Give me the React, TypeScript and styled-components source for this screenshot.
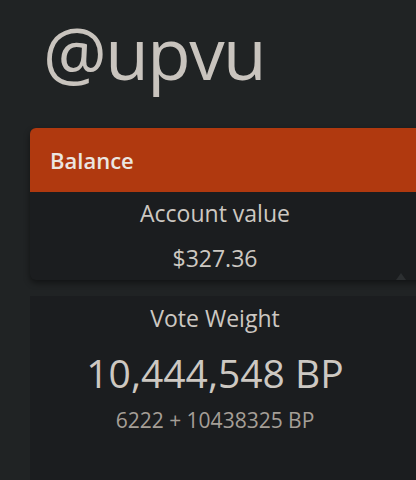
import React from 'react';
import styled, { createGlobalStyle } from 'styled-components';

const GlobalStyle = createGlobalStyle`
    html, body {
        margin: 0;
        padding: 0;
        background: #202324;
        overflow: hidden;
    }
    body {
        font-family: "Open Sans", "Noto Sans", sans-serif;
        color: #cdc8c2;
    }
`;

const Page = styled.div`
    width: 416px;
    height: 480px;
    overflow: hidden;
    padding: 0 0 0 30px;
    box-sizing: border-box;
`;

const Title = styled.h1`
    margin: 0;
    padding: 10px 0 0 13px;
    height: 128px;
    box-sizing: border-box;
    font-size: 71px;
    font-weight: 400;
    line-height: 86px;
    letter-spacing: -1.5px;
    color: #c9c4be;
`;

const Card = styled.section<{ $rounded?: boolean }>`
    width: 400px;
    background: #1b1d1f;
    border-radius: ${(p) => (p.$rounded ? '6px' : '0')};
    box-shadow: ${(p) => (p.$rounded ? '0 3px 6px rgba(0, 0, 0, 0.45)' : 'none')};
    overflow: hidden;
    position: relative;
`;

const CardHeader = styled.div`
    height: 64px;
    background: #b0390f;
    display: flex;
    align-items: center;
    padding-left: 20px;
    font-size: 22px;
    font-weight: 600;
    color: #ebe6e1;
`;

const CardBody = styled.div<{ $height: number }>`
    height: ${(p) => p.$height}px;
    padding-right: 30px;
    display: flex;
    flex-direction: column;
    align-items: center;
`;

const Label = styled.div<{ $top: number }>`
    margin-top: ${(p) => p.$top}px;
    font-size: 23px;
    line-height: 30px;
    color: #cdc8c2;
`;

const Value = styled.div<{ $size: number; $line: number; $top: number; $muted?: boolean }>`
    margin-top: ${(p) => p.$top}px;
    font-size: ${(p) => p.$size}px;
    line-height: ${(p) => p.$line}px;
    color: ${(p) => (p.$muted ? '#a59f97' : '#cdc8c2')};
`;

const Caret = styled.div`
    position: absolute;
    right: 24px;
    bottom: 0;
    width: 0;
    height: 0;
    border-left: 5px solid transparent;
    border-right: 5px solid transparent;
    border-bottom: 7px solid #2c2f31;
`;

const Gap = styled.div`
    height: 16px;
`;

export default function App() {
    return (
        <>
            <GlobalStyle />
            <Page>
                <Title>@upvu</Title>
                <Card $rounded>
                    <CardHeader>Balance</CardHeader>
                    <CardBody $height={88}>
                        <Label $top={6}>Account value</Label>
                        <Value $size={23} $line={30} $top={15}>$327.36</Value>
                    </CardBody>
                    <Caret />
                </Card>
                <Gap />
                <Card>
                    <CardBody $height={200}>
                        <Label $top={7}>Vote Weight</Label>
                        <Value $size={39} $line={46} $top={17}>10,444,548 BP</Value>
                        <Value $size={21} $line={28} $top={10} $muted>6222 + 10438325 BP</Value>
                    </CardBody>
                </Card>
            </Page>
        </>
    );
}
